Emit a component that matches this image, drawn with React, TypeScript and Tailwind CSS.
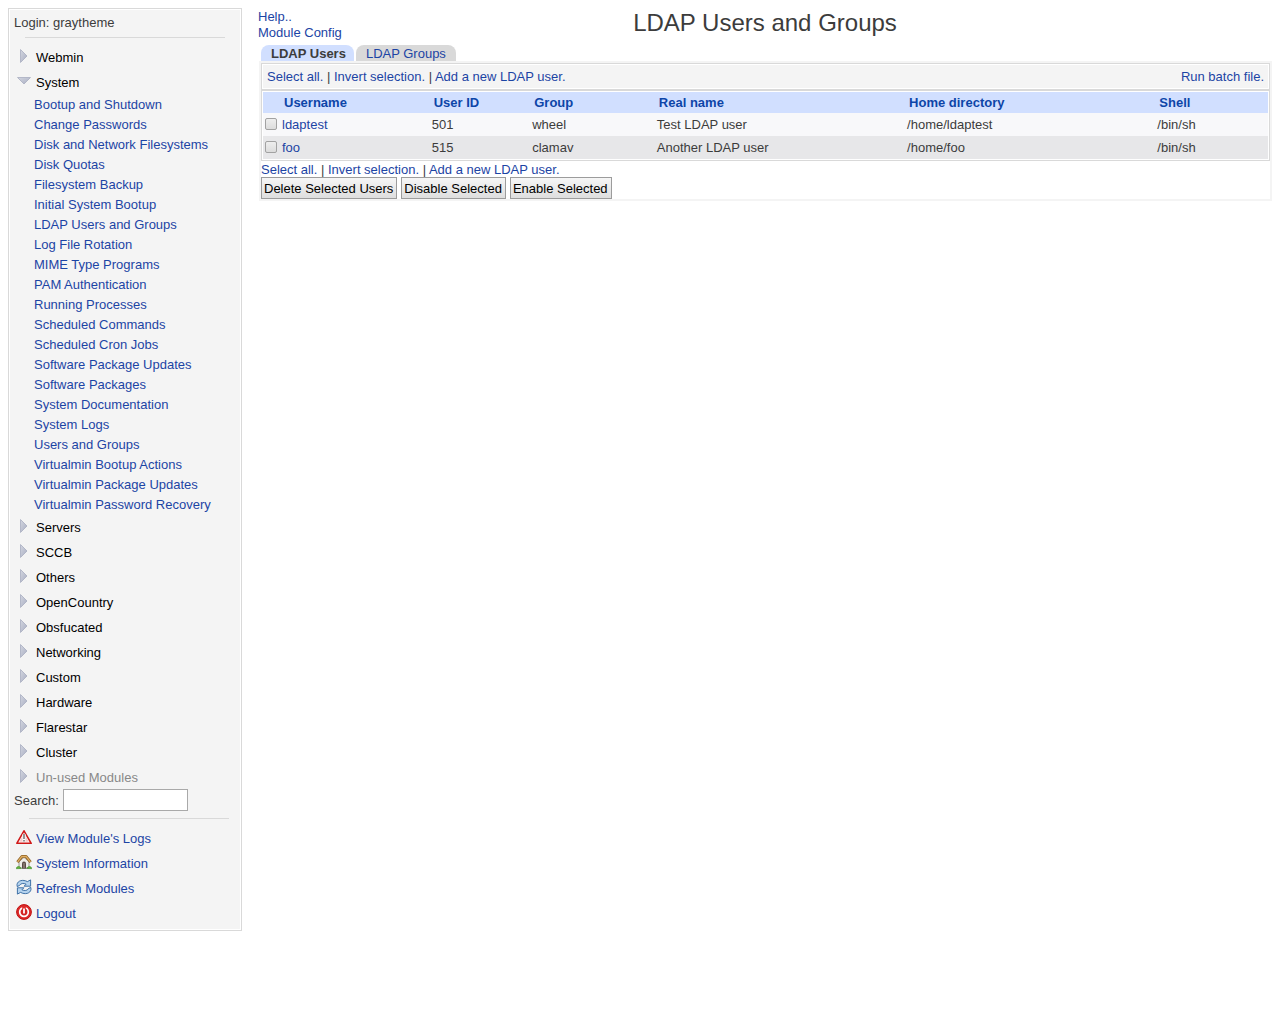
import React, { useState } from 'react';

const systemModules = [
  'Bootup and Shutdown',
  'Change Passwords',
  'Disk and Network Filesystems',
  'Disk Quotas',
  'Filesystem Backup',
  'Initial System Bootup',
  'LDAP Users and Groups',
  'Log File Rotation',
  'MIME Type Programs',
  'PAM Authentication',
  'Running Processes',
  'Scheduled Commands',
  'Scheduled Cron Jobs',
  'Software Package Updates',
  'Software Packages',
  'System Documentation',
  'System Logs',
  'Users and Groups',
  'Virtualmin Bootup Actions',
  'Virtualmin Package Updates',
  'Virtualmin Password Recovery',
];

const categories = [
  { name: 'Webmin', modules: [] },
  { name: 'System', modules: systemModules },
  { name: 'Servers', modules: [] },
  { name: 'SCCB', modules: [] },
  { name: 'Others', modules: [] },
  { name: 'OpenCountry', modules: [] },
  { name: 'Obsfucated', modules: [] },
  { name: 'Networking', modules: [] },
  { name: 'Custom', modules: [] },
  { name: 'Hardware', modules: [] },
  { name: 'Flarestar', modules: [] },
  { name: 'Cluster', modules: [] },
  { name: 'Un-used Modules', modules: [], unused: true },
];

const users = [
  { name: 'ldaptest', uid: 501, group: 'wheel', realName: 'Test LDAP user', home: '/home/ldaptest', shell: '/bin/sh' },
  { name: 'foo', uid: 515, group: 'clamav', realName: 'Another LDAP user', home: '/home/foo', shell: '/bin/sh' },
];

const Arrow = ({ open }: { open: boolean }) => (
  <svg className="mt-1" width="14" height="14" viewBox="0 0 14 14" aria-hidden="true">
    <defs>
      <linearGradient id="arrow" x1="0" y1="0" x2="1" y2="1">
        <stop offset="0" stopColor="#d3d6e0" />
        <stop offset="1" stopColor="#a9aec2" />
      </linearGradient>
    </defs>
    {open ? (
      <path d="M.5 3.5h13L7 10z" fill="url(#arrow)" stroke="#a8adc0" strokeWidth=".8" />
    ) : (
      <path d="M3.5.5v13L10 7z" fill="url(#arrow)" stroke="#a8adc0" strokeWidth=".8" />
    )}
  </svg>
);

const WarningIcon = () => (
  <svg className="mt-[3px]" width="16" height="16" viewBox="0 0 16 16" aria-hidden="true">
    <path d="M8 1.8 15.2 14.3H.8z" fill="#fff" stroke="#d01818" strokeWidth="1.6" strokeLinejoin="round" />
    <path d="M8 4.4 12.9 12.8H3.1z" fill="#f6cccc" />
    <path d="M8 5v7.6" stroke="#fff" strokeWidth="3" />
    <path d="M8 5v5M8 11v1.6" stroke="#7b7b7b" strokeWidth="1.6" />
  </svg>
);

const HomeIcon = () => (
  <svg className="mt-[3px]" width="16" height="16" viewBox="0 0 16 16" aria-hidden="true">
    <path d="M3 7.5 8 3.4l5 4.1V14H3z" fill="#f0eee9" stroke="#8b8378" strokeWidth=".8" />
    <path d="M6 14V9.5a2 2 0 0 1 4 0V14z" fill="#5b4b45" />
    <path d="M8 14V9" stroke="#a99a90" />
    <path d="M1.4 8.2 6 2.4h4l4.6 5.8" fill="none" stroke="#8a5d20" strokeWidth="2.8" strokeLinejoin="round" />
    <path d="M1.6 7.9 6 2.4h4l4.4 5.5" fill="none" stroke="#dfae62" strokeWidth="1.5" strokeLinejoin="round" />
    <path d="M.3 14.7c0-2.6 3.6-3.1 5-.2zM10.8 14.5c1.2-2.8 4.9-2.4 4.9.2z" fill="#65b53c" stroke="#3d8a2a" strokeWidth=".6" />
    <path d="M6 14.5h4.5" stroke="#77706a" />
  </svg>
);

const RefreshIcon = () => (
  <svg className="mt-[3px]" width="16" height="16" viewBox="0 0 16 16" aria-hidden="true">
    <g fill="#b5d3ee" stroke="#2f659f" strokeWidth=".9" strokeLinejoin="round">
      <path d="M1 5.6C1.6 1.4 7 .2 11.4 2.6L14.6.9v6.3H8.1l2-2C7.6 4 4.6 4.2 3.6 6.4L1.2 7.6z" />
      <path d="M15 10.4c-.6 4.2-6 5.4-10.4 3L1.4 15.1V8.8h6.5l-2 2c2.5 1.2 5.5 1 6.5-1.2l2.4-1.2z" />
    </g>
  </svg>
);

const LogoutIcon = () => (
  <svg className="mt-[3px]" width="16" height="16" viewBox="0 0 16 16" aria-hidden="true">
    <circle cx="8" cy="8" r="7.4" fill="#dc2b2b" stroke="#c01010" />
    <circle cx="8" cy="8" r="4.3" fill="#d42424" stroke="#fff" strokeWidth="1.7" />
    <path d="M8 1.8v3.4" stroke="#dc2b2b" strokeWidth="3.6" />
    <path d="M8 4.6v5" stroke="#fff" strokeWidth="1.8" />
  </svg>
);

const actions = [
  { label: "View Module's Logs", icon: <WarningIcon /> },
  { label: 'System Information', icon: <HomeIcon /> },
  { label: 'Refresh Modules', icon: <RefreshIcon /> },
  { label: 'Logout', icon: <LogoutIcon /> },
];

const linkColor = 'text-[#1c44a4]';

const SelectLinks = () => (
  <div>
    <a href="#all" className={linkColor}>Select all.</a> |{' '}
    <a href="#invert" className={linkColor}>Invert selection.</a> |{' '}
    <a href="#add" className={linkColor}>Add a new LDAP user.</a>
  </div>
);

const Sidebar = () => {
  const [search, setSearch] = useState('');

  return (
    <nav className="w-[234px] shrink-0 border border-[#d9d9d9] bg-white p-px">
      <div className="bg-[#f4f4f4] pb-[3px]">
        <div className="px-1 pt-[3px] leading-5">Login: graytheme</div>
        <hr className="mx-auto mt-1 mb-[7px] w-[200px] border-[#d9d9d9]" />
        <ul>
          {categories.map((category) => (
            <li key={category.name}>
              <a
                href="#category"
                className={`flex items-start gap-[5px] pl-[7px] leading-[25px] ${category.unused ? 'text-[#888888]' : 'text-black'}`}
              >
                <Arrow open={category.modules.length > 0} />
                {category.name}
              </a>
              {category.modules.length > 0 && (
                <ul className="pl-6 leading-5">
                  {category.modules.map((module) => (
                    <li key={module}>
                      <a href="#module" className={linkColor}>{module}</a>
                    </li>
                  ))}
                </ul>
              )}
            </li>
          ))}
        </ul>
        <form className="-mt-px flex gap-1 pl-1 leading-6" onSubmit={(e) => e.preventDefault()}>
          <label htmlFor="search">Search:</label>
          <input
            id="search"
            type="text"
            value={search}
            onChange={(e) => setSearch(e.target.value)}
            className="h-[22px] w-[125px] border border-[#a9a9a9] bg-white px-1"
          />
        </form>
        <hr className="mt-[5px] mb-[7px] ml-[19px] w-[200px] border-[#d9d9d9]" />
        <ul>
          {actions.map((action) => (
            <li key={action.label}>
              <a href="#action" className="flex items-start gap-1 pl-1.5 leading-[25px] text-[#1c44a4]">
                {action.icon}
                {action.label}
              </a>
            </li>
          ))}
        </ul>
      </div>
    </nav>
  );
};

const UsersTable = () => (
  <div className="border border-[#d9d9d9] bg-white p-px">
    <table className="w-full table-fixed border-collapse text-left">
      <colgroup>
        <col className="w-[17px]" />
        <col className="w-[14.9%]" />
        <col className="w-[10%]" />
        <col className="w-[12.4%]" />
        <col className="w-[24.9%]" />
        <col className="w-[24.9%]" />
        <col />
      </colgroup>
      <thead className="bg-[#d1dfff] text-[#0d45a8]">
        <tr className="h-[21px]">
          <th></th>
          <th className="pl-1">Username</th>
          <th className="pl-1">User ID</th>
          <th className="pl-1">Group</th>
          <th className="pl-1">Real name</th>
          <th className="pl-1">Home directory</th>
          <th className="pl-1">Shell</th>
        </tr>
      </thead>
      <tbody>
        {users.map((user) => (
          <tr key={user.name} className="h-[23px] odd:bg-[#f8f8fa] even:bg-[#e7e7e9]">
            <td className="pl-0.5">
              <input
                type="checkbox"
                aria-label={user.name}
                className="mb-px block size-3 appearance-none rounded-xs border border-[#a2a2a2] bg-linear-to-b from-[#eeeeee] to-[#dcdcdc] checked:bg-[#0d45a8]"
              />
            </td>
            <td className="pl-0.5"><a href="#user" className={linkColor}>{user.name}</a></td>
            <td className="pl-0.5">{user.uid}</td>
            <td className="pl-0.5">{user.group}</td>
            <td className="pl-0.5">{user.realName}</td>
            <td className="pl-0.5">{user.home}</td>
            <td className="pl-0.5">{user.shell}</td>
          </tr>
        ))}
      </tbody>
    </table>
  </div>
);

const App = () => {
  return (
    <div className="flex items-start gap-4 p-2 font-['Liberation_Sans',Arial,sans-serif] text-[13px] text-[#3c3c3c]">
      <Sidebar />
      <main className="min-w-0 flex-1">
        <header className="grid h-[37px] grid-cols-[1fr_auto_1fr] items-start">
          <div className="pt-px leading-4">
            <a href="#help" className={linkColor}>Help..</a>
            <br />
            <a href="#config" className={linkColor}>Module Config</a>
          </div>
          <h1 className="text-2xl leading-[30px]">LDAP Users and Groups</h1>
        </header>

        <div className="flex h-4 gap-0.5 pl-[3px] leading-[18px]">
          <a href="#users" className="rounded-t-lg bg-[#d1dfff] pr-2 pl-2.5 font-bold text-[#3c3c3c]">LDAP Users</a>
          <a href="#groups" className="rounded-t-lg bg-[#d9d9d9] px-2.5 text-[#1c44a4]">LDAP Groups</a>
        </div>

        <section className="ml-px border-2 border-[#f4f4f4]">
          <div className="border border-[#d9d9d9] bg-white p-px">
            <div className="flex justify-between bg-[#f4f4f4] px-1 pt-1 pb-[3px] leading-4">
              <SelectLinks />
              <a href="#batch" className={linkColor}>Run batch file.</a>
            </div>
          </div>
          <UsersTable />
          <div className="h-4 leading-[18px]">
            <SelectLinks />
          </div>
          <div className="flex gap-1">
            {['Delete Selected Users', 'Disable Selected', 'Enable Selected'].map((label) => (
              <button
                key={label}
                type="button"
                className="h-[22px] border border-[#9c9c9c] bg-linear-to-b from-[#f6f6f6] to-[#dedede] pt-px pr-[3px] pl-0.5 text-black"
              >
                {label}
              </button>
            ))}
          </div>
        </section>
      </main>
    </div>
  );
};

export default App;
